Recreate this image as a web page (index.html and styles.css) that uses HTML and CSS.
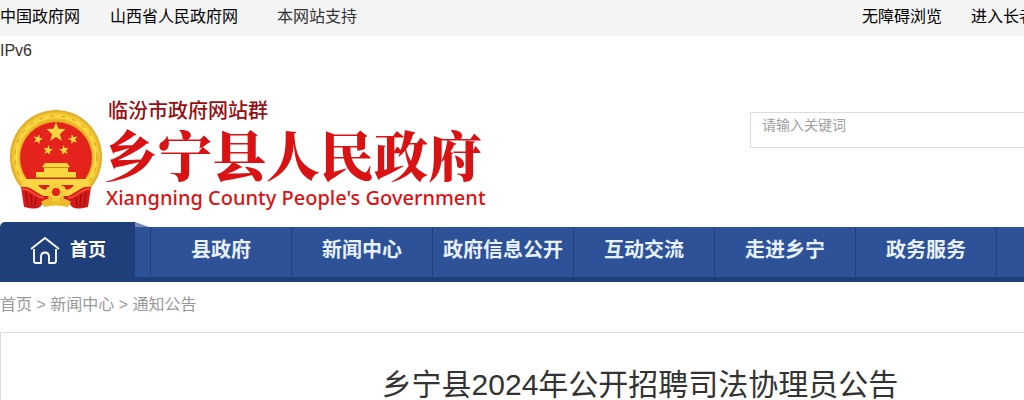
FILE: index.html
```html
<!DOCTYPE html>
<html lang="zh-CN">
<head>
    <meta charset="utf-8">
    <title>乡宁县2024年公开招聘司法协理员公告</title>
    <link rel="stylesheet" href="styles.css">
</head>

<body>
    <div class="top">
        <div class="wrap top-in">
            <div class="top-left">
                <a href="#">中国政府网</a><a href="#">山西省人民政府网</a><span class="ipv6">本网站支持 IPv6</span>
            </div>
            <div class="top-right">
                <a href="#">无障碍浏览</a><a href="#">进入长者模式</a>
            </div>
        </div>
    </div>

    <div class="wrap header">
        <a class="logo" href="#">
            <svg class="emblem" viewBox="0 0 92 100" width="92" height="100" aria-hidden="true">
                <defs>
                    <radialGradient id="gold" cx="50%" cy="50%" r="50%">
                        <stop offset="78%" stop-color="#e8b022" />
                        <stop offset="86%" stop-color="#fbdc48" />
                        <stop offset="94%" stop-color="#f0c02c" />
                        <stop offset="100%" stop-color="#dba426" />
                    </radialGradient>
                    <path id="star" d="M0-10 2.4-3.2 9.5-3.1 3.8 2.2 5.9 8.8 0 5-5.9 8.8-3.8 2.2-9.5-3.1-2.4-3.2z" />
                </defs>
                <ellipse cx="46" cy="47" rx="46" ry="47" fill="url(#gold)" />
                <circle cx="46" cy="47" r="41" fill="none" stroke="#d39a1e" stroke-width="1" stroke-dasharray="4 7" />
                <circle cx="46" cy="48" r="36" fill="#e3231c" />
                <g fill="#f8d743">
                    <use href="#star" transform="translate(46 22)" />
                    <use href="#star" transform="translate(28 29) rotate(15) scale(.5)" />
                    <use href="#star" transform="translate(63 29) rotate(-15) scale(.5)" />
                    <use href="#star" transform="translate(38 40) rotate(10) scale(.5)" />
                    <use href="#star" transform="translate(54 40) rotate(-10) scale(.5)" />
                    <path d="M35 53h22l3 4H32zM34 58h24v4h8v5H26v-5h8z" />
                    <path d="M14 69h64l3 9c-8-1-14 4-21 8H32c-7-4-13-9-21-8z" />
                </g>
                <path d="M28 75h13l-6 5c-3-1-6-3-7-5zM64 75H51l6 5c3-1 6-3 7-5z" fill="#dd2119" />
                <path d="M11 77c9-2 15 6 23 9l24 0c8-3 14-11 23-9l-3 20c-6 1-10 3-16 0l-6-8H36l-6 8c-6 3-10 1-16 0z" fill="#d51b19" />
                <path d="M16 82l2 15M21 84l1 13M26 87l-1 11M76 82l-2 15M71 84l-1 13M66 87l1 11" stroke="#a90f13" stroke-width="1.5" fill="none" />
                <path d="M12 79c9-1 12 8 22 9M80 79c-9-1-12 8-22 9" stroke="#f24c32" stroke-width="2" fill="none" />
                <path d="M31 92c5-4 10-3 15-1 5-2 10-3 15 1l-3 5c-8-2-16-2-24 0z" fill="#edba2c" />
                <circle cx="46" cy="82" r="6" fill="#e3231c" stroke="#f6cf3c" stroke-width="4" />
                <circle cx="46" cy="82" r="9" fill="none" stroke="#f6cf3c" stroke-width="2" stroke-dasharray="3 2" />
                <path d="M33 57.5h26M26 67.5h40" stroke="#c88b17" stroke-width="1" />
            </svg>
            <span class="logo-text">
                <span class="logo-group">临汾市政府网站群</span>
                <span class="logo-name">乡宁县人民政府</span>
                <span class="logo-en">Xiangning County People's Government</span>
            </span>
        </a>
        <form class="search">
            <input type="text" placeholder="请输入关键词" aria-label="请输入关键词">
        </form>
    </div>

    <div class="nav">
        <ul class="wrap">
            <li class="home">
                <a href="#">
                    <svg viewBox="0 0 30 28" width="30" height="28" fill="none" stroke="#fff" stroke-width="1.8" stroke-linejoin="round" aria-hidden="true">
                        <path d="M1 13 15 2l14 11" />
                        <path d="M4 13v12q0 2 2 2h5v-6c0-6 8-6 8 0v6h5q2 0 2-2V13" />
                    </svg>
                    首页
                </a>
            </li>
            <li><a href="#">县政府</a></li>
            <li><a href="#">新闻中心</a></li>
            <li><a href="#">政府信息公开</a></li>
            <li><a href="#">互动交流</a></li>
            <li><a href="#">走进乡宁</a></li>
            <li><a href="#">政务服务</a></li>
            <li></li>
        </ul>
    </div>

    <div class="wrap crumb">
        <a href="#">首页</a> &gt; <a href="#">新闻中心</a> &gt; <a href="#">通知公告</a>
    </div>

    <div class="wrap article">
        <h1>乡宁县2024年公开招聘司法协理员公告</h1>
    </div>
</body>
</html>
```
FILE: styles.css
```css
* {
    margin: 0;
    padding: 0;
    box-sizing: border-box;
}

html {
    overflow: hidden;
}

body {
    min-width: 1280px;
    background: #fff;
    color: #333;
    font: 16px "Liberation Sans", "Noto Sans CJK SC", sans-serif;
}

a {
    color: inherit;
    text-decoration: none;
}

ul {
    list-style: none;
}

.wrap {
    width: 100%;
    max-width: 1280px;
    margin: 0 auto;
}

/* 顶部 */
.top {
    height: 36px;
    background: #f4f4f4;
    line-height: 34px;
}

.top-in {
    display: flex;
    justify-content: space-between;
}

.top a {
    color: #000;
}

.top-left {
    width: 370px;
}

.top-left a {
    margin-right: 30px;
}

.ipv6 {
    padding-left: 9px;
}

.top-right {
    padding-right: 213px;
}

.top-right a + a {
    margin-left: 29px;
}

/* logo和搜索 */
.header {
    display: flex;
    align-items: flex-start;
    padding-top: 60px;
    height: 186px;
}

.logo {
    display: flex;
    width: 490px;
    padding-left: 10px;
}

.emblem {
    flex: none;
    margin-top: 14px;
}

.logo-text {
    padding-left: 2px;
    color: #d91314;
    white-space: nowrap;
}

.logo-text span {
    display: block;
}

.logo-group {
    padding-left: 4px;
    font-size: 20px;
    font-weight: 500;
    line-height: 30px;
    color: #980d10;
}

.logo-name {
    font-family: "Noto Serif CJK SC", "Noto Sans CJK SC", serif;
    font-size: 54px;
    font-weight: 900;
    line-height: 56px;
}

.logo-en {
    padding-left: 2px;
    font-family: "Noto Sans", sans-serif;
    font-size: 20px;
    font-weight: 500;
    line-height: 32px;
}

.search {
    flex: 1;
    margin: 16px 0 0 260px;
}

.search input {
    display: block;
    width: 100%;
    height: 36px;
    padding: 0 11px 10px;
    border: 1px solid #ddd;
    font: 14px "Liberation Sans", "Noto Sans CJK SC", sans-serif;
}

.search input::placeholder {
    color: #a0a0a0;
}

/* 导航 */
.nav {
    margin-top: 5px;
    border-bottom: 5px solid #1f3f7b;
    background: #2d5298;
}

.nav ul {
    display: flex;
    height: 50px;
}

.nav li {
    width: 141px;
    border-left: 1px solid #1f3f7b;
    color: #e8f1ff;
    font-size: 20px;
    font-weight: bold;
    line-height: 46px;
    text-align: center;
}

.nav li a {
    display: block;
}

.nav .home {
    position: relative;
    width: 135px;
    height: 60px;
    margin: -5px 15px 0 0;
    border: none;
    border-radius: 5px 0 0 0;
    background: #1f3f7b;
    color: #fff;
    font-size: 18px;
    line-height: 56px;
}

.nav .home::after {
    content: "";
    position: absolute;
    left: 100%;
    top: 0;
    border-style: solid;
    border-width: 5px 0 0 14px;
    border-color: transparent transparent transparent #6f88b7;
}

.nav .home a {
    display: flex;
    align-items: center;
    gap: 10px;
    padding-left: 30px;
}

/* 当前位置 */
.crumb {
    height: 50px;
    color: #999;
    line-height: 46px;
}

.article {
    min-height: 300px;
    padding-top: 30px;
    border: 1px solid #ddd;
}

.article h1 {
    font-size: 30px;
    font-weight: normal;
    line-height: 44px;
    text-align: center;
}
```
